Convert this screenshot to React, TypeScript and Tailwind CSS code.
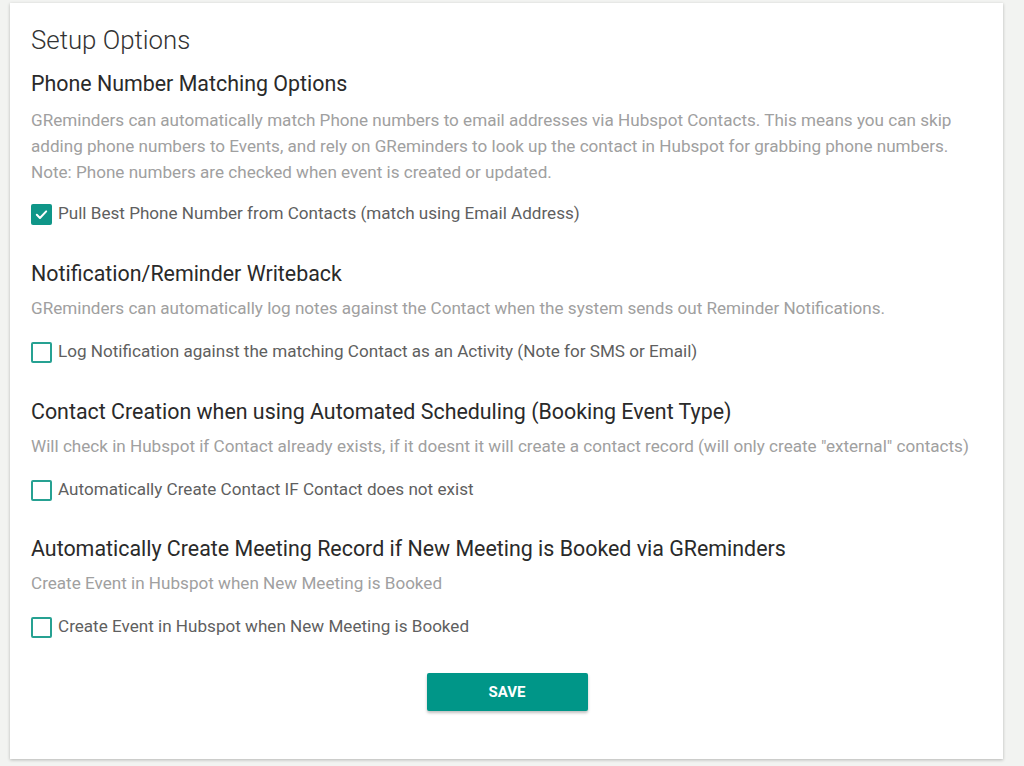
import React, { useState } from 'react';

type Option = {
  title: string;
  desc: string;
  label: string;
  checked: boolean;
};

const options: Option[] = [
  {
    title: 'Phone Number Matching Options',
    desc: 'GReminders can automatically match Phone numbers to email addresses via Hubspot Contacts. This means you can skip adding phone numbers to Events, and rely on GReminders to look up the contact in Hubspot for grabbing phone numbers. Note: Phone numbers are checked when event is created or updated.',
    label: 'Pull Best Phone Number from Contacts (match using Email Address)',
    checked: true,
  },
  {
    title: 'Notification/Reminder Writeback',
    desc: 'GReminders can automatically log notes against the Contact when the system sends out Reminder Notifications.',
    label: 'Log Notification against the matching Contact as an Activity (Note for SMS or Email)',
    checked: false,
  },
  {
    title: 'Contact Creation when using Automated Scheduling (Booking Event Type)',
    desc: 'Will check in Hubspot if Contact already exists, if it doesnt it will create a contact record (will only create "external" contacts)',
    label: 'Automatically Create Contact IF Contact does not exist',
    checked: false,
  },
  {
    title: 'Automatically Create Meeting Record if New Meeting is Booked via GReminders',
    desc: 'Create Event in Hubspot when New Meeting is Booked',
    label: 'Create Event in Hubspot when New Meeting is Booked',
    checked: false,
  },
];

// top margin of each section, tuned per block
const sectionGap = ['mt-[14px]', 'mt-[35px]', 'mt-[35px]', 'mt-[34px]'];

const Checkbox: React.FC<{ checked: boolean; onChange: () => void; label: string }> = ({ checked, onChange, label }) => (
  <label className="flex items-center h-[22px] cursor-pointer select-none" onClick={onChange}>
    <span
      className={
        checked
          ? 'w-[21px] h-[21px] rounded-[2px] bg-[#0f9688] flex items-center justify-center flex-shrink-0'
          : 'w-[21px] h-[21px] rounded-[2px] border-2 border-[#26a192] bg-white flex-shrink-0'
      }
    >
      {checked && (
        <svg width="15" height="15" viewBox="0 0 24 24" fill="none" stroke="white" strokeWidth="3.2" strokeLinecap="round" strokeLinejoin="round">
          <path d="M4.5 12.5l5 5L19.5 7" />
        </svg>
      )}
    </span>
    <span className="ml-[6px] text-[17.1px] text-[#5f5f5f] whitespace-nowrap">{label}</span>
  </label>
);

const App: React.FC = () => {
  const [checks, setChecks] = useState(options.map((o) => o.checked));

  return (
    <div className="min-h-screen bg-[#f2f3f1] pt-[3px] pl-[10px] pr-[21px] font-['Roboto',_'Liberation_Sans',_sans-serif]">
      <div className="bg-white shadow-[0_1px_3px_rgba(0,0,0,0.25)] pt-[21px] pl-[21px] pr-[20px] pb-[48px]">
        <h1 className="text-[25.8px] leading-[32px] font-light text-[#333]">Setup Options</h1>

        {options.map((o, i) => (
          <section key={o.title} className={sectionGap[i]}>
            <h2 className="text-[21.4px] leading-[28px] text-[#2a2a2a] whitespace-nowrap">{o.title}</h2>
            <p className={i === 0 ? 'mt-[9px] text-[17.1px] leading-[26px] text-[#a0a0a0]' : 'mt-[7px] text-[17.1px] leading-[26px] text-[#a0a0a0]'}>
              {o.desc}
            </p>
            <div className={i === 0 ? 'mt-[18px]' : 'mt-[20px]'}>
              <Checkbox
                checked={checks[i]}
                label={o.label}
                onChange={() => setChecks(checks.map((c, j) => (j === i ? !c : c)))}
              />
            </div>
          </section>
        ))}

        <div className="flex justify-center mt-[35px]">
          <button className="w-[161px] h-[38px] rounded-[2px] bg-[#009688] text-white text-[15px] font-bold shadow-[0_2px_3px_rgba(0,0,0,0.25)]">
            SAVE
          </button>
        </div>
      </div>
    </div>
  );
};

export default App;
